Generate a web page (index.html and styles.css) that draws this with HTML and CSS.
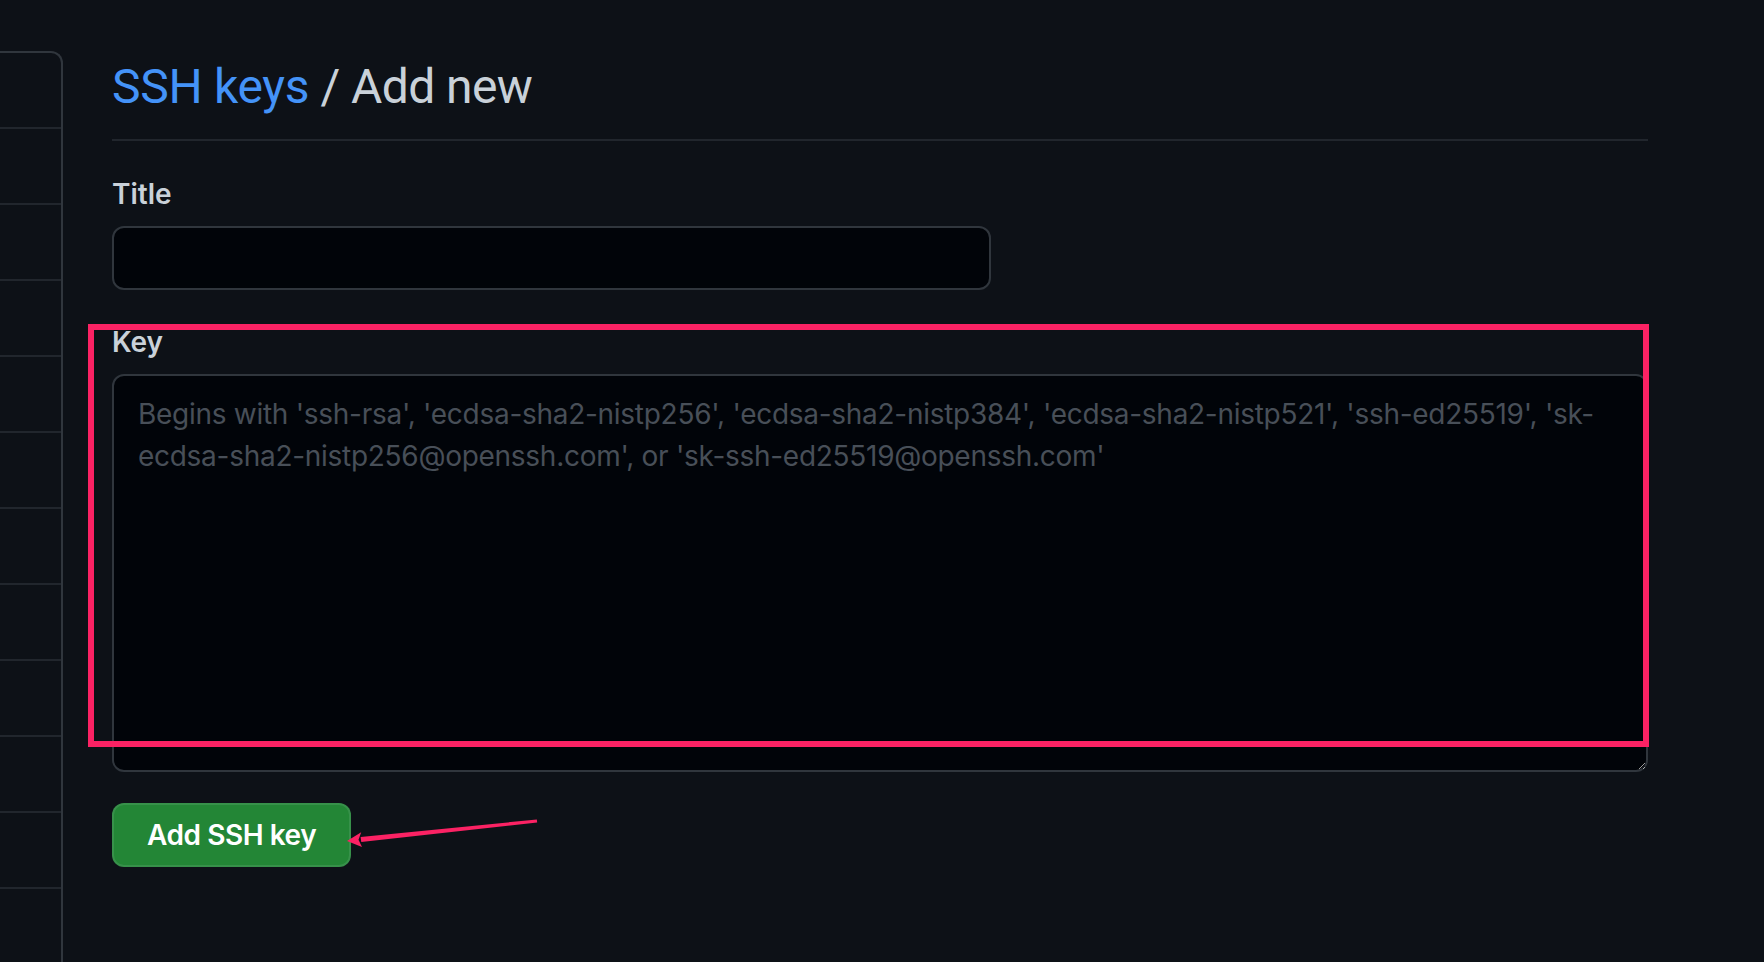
FILE: index.html
```html
<!DOCTYPE html>
<html lang="en">
<head>
<meta charset="utf-8">
<title>Add new SSH key</title>
<link rel="stylesheet" href="styles.css">
</head>
<body>
<div class="layout">
  <nav class="sidebar">
    <div class="side-card">
      <div class="side-row"></div>
      <div class="side-row"></div>
      <div class="side-row"></div>
      <div class="side-row"></div>
      <div class="side-row"></div>
      <div class="side-row"></div>
      <div class="side-row"></div>
      <div class="side-row"></div>
      <div class="side-row"></div>
      <div class="side-row"></div>
      <div class="side-row"></div>
      <div class="side-row"></div>
    </div>
  </nav>
  <main class="content">
    <div class="subhead">
      <h2 class="subhead-heading"><a href="#" class="crumb-link">SSH keys</a> / Add new</h2>
    </div>
    <form class="key-form">
      <div class="field">
        <label class="field-label" for="title">Title</label>
        <input class="form-control title-input" id="title" type="text">
      </div>
      <div class="field key-field">
        <label class="field-label" for="key">Key</label>
        <textarea class="form-control key-textarea" id="key" placeholder="Begins with 'ssh-rsa', 'ecdsa-sha2-nistp256', 'ecdsa-sha2-nistp384', 'ecdsa-sha2-nistp521', 'ssh-ed25519', 'sk-ecdsa-sha2-nistp256@openssh.com', or 'sk-ssh-ed25519@openssh.com'"></textarea>
        <div class="annot-box"></div>
      </div>
      <div class="actions">
        <button type="button" class="btn-primary">Add SSH key</button>
        <svg class="annot-arrow" width="440" height="60" viewBox="0 0 440 60">
          <polygon fill="#fb2264" points="425.2,19.5 424.8,16.5 248.6,34.0 249.3,39.0"/>
          <polygon fill="#fb2264" points="235,38 249.2,29.2 246.5,36.8 250.0,44.0"/>
        </svg>
      </div>
    </form>
  </main>
</div>
</body>
</html>
```

FILE: styles.css
```css
html, body {
  margin: 0;
  padding: 0;
  background: #0d1117;
  height: 100%;
  overflow: hidden;
}

body {
  font-family: Inter, "Noto Sans", "Liberation Sans", sans-serif;
  color: #c9d1d9;
}

.layout {
  display: flex;
  align-items: flex-start;
}

.sidebar {
  width: 63px;
  flex: none;
  padding-top: 51px;
}

.side-card {
  margin-left: -30px;
  border: 2px solid #30363d;
  border-radius: 0 12px 0 0;
  border-bottom: none;
}

.side-row {
  height: 74px;
  border-bottom: 2px solid #21262d;
}

.content {
  margin-left: 49px;
  width: 1536px;
  padding-top: 51px;
}

.subhead {
  padding-bottom: 16px;
  border-bottom: 2px solid #21262d;
  margin-bottom: 32px;
}

.subhead-heading {
  margin: 0;
  font-family: Roboto, Inter, sans-serif;
  font-size: 48px;
  line-height: 72px;
  font-weight: 400;
  color: #c9d1d9;
  letter-spacing: -0.6px;
}

.crumb-link {
  color: #4493f8;
  text-decoration: none;
  letter-spacing: -0.3px;
}

.field {
  margin-bottom: 31px;
}

.field-label {
  display: block;
  font-size: 28px;
  line-height: 42px;
  font-weight: 600;
  color: #c9d1d9;
  margin-bottom: 11px;
}

.form-control {
  display: block;
  box-sizing: border-box;
  background: #010409;
  border: 2px solid #30363d;
  border-radius: 12px;
  color: #e6edf3;
  font-family: inherit;
  font-size: 28px;
  outline: none;
}

.title-input {
  width: 879px;
  height: 64px;
  padding: 0 24px;
}

.key-field {
  position: relative;
  margin-bottom: 31px;
}

.key-textarea {
  width: 1536px;
  height: 398px;
  padding: 17px 24px 10px;
  line-height: 42px;
  resize: vertical;
  letter-spacing: -0.28px;
}

.key-textarea::placeholder {
  color: #484f58;
}

.annot-box {
  position: absolute;
  top: 3px;
  left: -24px;
  width: 1561px;
  height: 423px;
  box-sizing: border-box;
  border: 6px solid #fb2264;
  pointer-events: none;
}

.actions {
  position: relative;
}

.btn-primary {
  height: 64px;
  box-sizing: border-box;
  padding: 0 33px;
  background: #238636;
  border: 2px solid rgba(240, 246, 252, 0.1);
  border-radius: 12px;
  color: #ffffff;
  font-family: inherit;
  font-size: 28px;
  font-weight: 600;
  letter-spacing: -0.45px;
  cursor: pointer;
}

.annot-arrow {
  position: absolute;
  left: 0;
  top: 0;
}
```
